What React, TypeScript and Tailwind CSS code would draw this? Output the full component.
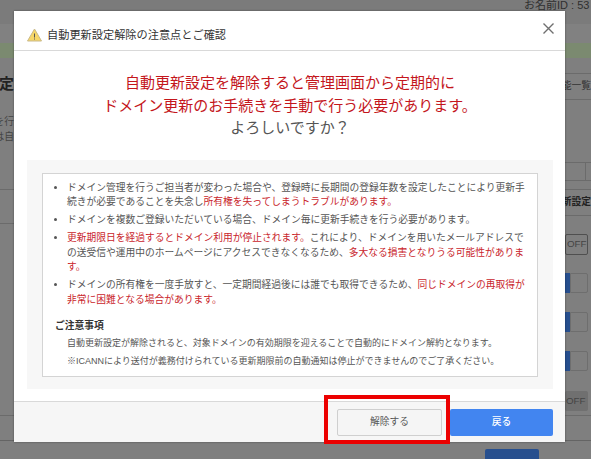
import React from 'react'

const font = 'font-["Liberation_Sans","Noto_Sans_CJK_JP",sans-serif]'

function WarnIcon() {
  return (
    <svg width="15" height="14" viewBox="0 0 15 14" className="shrink-0">
      <path d="M7.5 1 L14.5 13 H0.5 Z" fill="#f7d768" stroke="#c9b98a" strokeWidth="1" strokeLinejoin="round" />
      <rect x="7" y="5.5" width="1" height="4" fill="#555" />
      <rect x="7" y="10.5" width="1" height="1" fill="#555" />
    </svg>
  )
}

function Red({ children }: { children: React.ReactNode }) {
  return <span className="text-[#c9252c]">{children}</span>
}

function Toggle() {
  return (
    <div className="h-[20px] w-[23px] flex">
      <div className="w-[5px] bg-[#274f8e]" />
      <div className="flex-1 border border-[#6e6e6e] rounded-r-[2px]" />
    </div>
  )
}

function Background() {
  return (
    <div className="flex flex-col h-full text-[9.75px] text-[#2f2f2f]">
      <div className="h-[24px] bg-[#7b7b7b] flex pl-[524px] whitespace-nowrap overflow-hidden">
        <span className="text-[11px] leading-[11px]">お名前ID : 53</span>
      </div>
      <div className="h-[20px] bg-[#818181]" />
      <div className="h-[15px] bg-[#7b8a70]" />
      <div className="h-[362px] flex justify-between">
        {/* 左側 */}
        <div className="w-[14px] overflow-hidden flex flex-col items-end whitespace-nowrap">
          <div className="mt-[16px] text-[15px] leading-[20px] font-bold text-[#222]">設定</div>
          <div className="mt-[20px] leading-[15px] text-[#444]">サービスを行</div>
          <div className="leading-[15px] text-[#444]">更新は自</div>
          <div className="mt-[45px] w-[14px] h-[35px] border-y border-[#6b6b6b]" />
        </div>
        {/* 右側 */}
        <div className="w-[26px] overflow-hidden flex flex-col whitespace-nowrap">
          <div className="mt-[15px] h-[27px] border-y border-[#6b6b6b] flex justify-end items-center text-[#333]">機能一覧</div>
          <div className="mt-[62px] h-[19px] border-y border-[#6b6b6b] pl-[20px]">
            <div className="h-full border-l border-[#6b6b6b]" />
          </div>
          <div className="h-[9px] border-b border-[#6b6b6b]" />
          <div className="h-[25px] flex justify-end items-center font-bold text-[#222]">更新設定</div>
          <div className="h-[9px] border-t border-[#6b6b6b]" />
          <div className="h-[10px]" />
          <div className="h-[21px] w-[23px] border border-[#4f4f4f] rounded-[2px] flex items-center pl-[1px] text-[#444]">OFF</div>
          <div className="mt-[18px] flex flex-col gap-[19px]">
            <Toggle />
            <Toggle />
            <Toggle />
          </div>
          <div className="mt-[20px] h-[20px] w-[23px] bg-[#707070] rounded-[2px] flex items-center pl-[1px] text-[#444]">OFF</div>
        </div>
      </div>
      <div className="h-[25px] border-t border-[#6b6b6b]" />
      <div className="flex-1 border-t border-[#646464] pl-[485px] pt-[8px]">
        <div className="w-[54px] h-[10px] bg-[#274f8e] rounded-t-[2px]" />
      </div>
    </div>
  )
}

export default function App() {
  return (
    <div className={`relative w-[591px] h-[459px] overflow-hidden bg-[#7f7f7f] ${font}`}>
      <Background />

      <div className="absolute left-[14px] top-[11px] w-[551px] h-[431px] bg-white flex flex-col shadow-[0_0_2px_rgba(0,0,0,0.4)]">
        <div className="h-[40px] shrink-0 border-b border-[#d9d9d9] flex items-start pl-[13px] pr-[11px] pt-[16px]">
          <div className="flex-1 flex items-center gap-[5px] h-[16px]">
            <WarnIcon />
            <span className="text-[11.2px] text-[#333]">自動更新設定解除の注意点とご確認</span>
          </div>
          <svg width="11" height="11" viewBox="0 0 11 11" className="-mt-[4px]">
            <path d="M0.5 0.5 L10.5 10.5 M10.5 0.5 L0.5 10.5" stroke="#6f6f6f" strokeWidth="1.4" />
          </svg>
        </div>

        <div className="flex-1 pl-[13px] pr-[12px] pt-[21px]">
          <div className="text-center text-[15px] leading-[22.5px] text-[#c4161c]">
            <p>自動更新設定を解除すると管理画面から定期的に</p>
            <p>ドメイン更新のお手続きを手動で行う必要があります。</p>
            <p className="text-[#555]">よろしいですか？</p>
          </div>

          <div className="mt-[20px] bg-[#f7f7f7] px-[15px] pt-[13px] pb-[12px]">
            <div className="bg-white border border-[#d4d4d4] h-[204px] pl-[12px] pr-[8px] pt-[7px] text-[9.75px] leading-[14.625px] text-[#555]">
              <ul className="list-disc pl-[12px] flex flex-col gap-[3.4px]">
                <li>ドメイン管理を行うご担当者が変わった場合や、登録時に長期間の登録年数を設定したことにより更新手続きが必要であることを失念し<Red>所有権を失ってしまうトラブルがあります。</Red></li>
                <li>ドメインを複数ご登録いただいている場合、ドメイン毎に更新手続きを行う必要があります。</li>
                <li><Red>更新期限日を経過するとドメイン利用が停止されます。</Red>これにより、ドメインを用いたメールアドレスでの送受信や運用中のホームページにアクセスできなくなるため、<Red>多大なる損害となりうる可能性があります。</Red></li>
                <li>ドメインの所有権を一度手放すと、一定期間経過後には誰でも取得できるため、<Red>同じドメインの再取得が非常に困難となる場合があります。</Red></li>
              </ul>
              <p className="mt-[11px] font-bold text-[#333]">ご注意事項</p>
              <p className="pl-[12px] mt-[1px] text-[9px] leading-[18px]">自動更新設定が解除されると、対象ドメインの有効期限を迎えることで自動的にドメイン解約となります。</p>
              <p className="pl-[12px] text-[9px] leading-[18px]">※ICANNにより送付が義務付けられている更新期限前の自動通知は停止ができませんのでご了承ください。</p>
            </div>
          </div>
        </div>

        <div className="h-[41px] shrink-0 border-t border-[#d9d9d9] bg-[#f6f6f6] flex justify-end gap-[8px] pr-[12px] pt-[7px]">
          <button className="relative w-[105px] h-[27px] bg-[#f5f5f5] border border-[#cfcfcf] rounded-[2px] text-[9.75px] text-[#555]">
            解除する
            <span className="absolute -left-[14px] -right-[9px] -top-[15px] -bottom-[9px] border-[4px] border-[#ec0000]" />
          </button>
          <button className="w-[103px] h-[27px] bg-[#4285f0] rounded-[2px] text-[9.75px] font-medium text-white">戻る</button>
        </div>
      </div>
    </div>
  )
}
